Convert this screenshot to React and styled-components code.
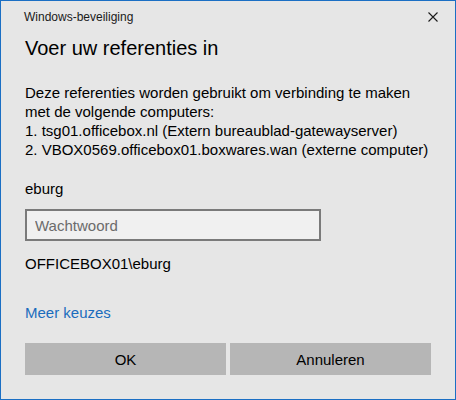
import React, { useState } from 'react'
import styled, { createGlobalStyle } from 'styled-components'

const GlobalStyle = createGlobalStyle`
  html, body {
    margin: 0;
    padding: 0;
    background: #e6e6e6;
  }
  * {
    box-sizing: border-box;
  }
`

const App = () => {
  const [password, setPassword] = useState("")

  return (
    <>
      <GlobalStyle />
      <Window>
        <TitleBar>
          <WindowTitle>Windows-beveiliging</WindowTitle>
          <CloseButton aria-label="Sluiten">
            <svg width="10" height="10" viewBox="0 0 10 10">
              <path d="M0.5 0.5 L9.5 9.5 M9.5 0.5 L0.5 9.5" stroke="#1a1a1a" strokeWidth="1.1" fill="none" />
            </svg>
          </CloseButton>
        </TitleBar>

        <Content>
          <Heading>Voer uw referenties in</Heading>

          <Description>
            Deze referenties worden gebruikt om verbinding te maken<br />
            met de volgende computers:<br />
            1. tsg01.officebox.nl (Extern bureaublad-gatewayserver)<br />
            2. VBOX0569.officebox01.boxwares.wan (externe computer)
          </Description>

          <UserName>eburg</UserName>

          <PasswordField
            type="password"
            placeholder="Wachtwoord"
            value={password}
            onChange={(e) => setPassword(e.target.value)}
          />

          <Domain>OFFICEBOX01\eburg</Domain>

          <MoreLink href="#">Meer keuzes</MoreLink>

          <ButtonRow>
            <DialogButton>OK</DialogButton>
            <DialogButton>Annuleren</DialogButton>
          </ButtonRow>
        </Content>
      </Window>
    </>
  )
}

export default App

const Window = styled.div`
  width: 456px;
  height: 400px;
  background-color: #e6e6e6;
  border: 1px solid #1b6fc4;
  display: flex;
  flex-direction: column;
  font-family: "Liberation Sans", Arial, sans-serif;
  color: #000;
`

const TitleBar = styled.div`
  height: 32px;
  display: flex;
  align-items: center;
  justify-content: space-between;
  padding: 0 17px 0 23px;
`

const WindowTitle = styled.span`
  font-size: 12px;
  line-height: 16px;
  color: #1a1a1a;
`

const CloseButton = styled.button`
  all: unset;
  width: 10px;
  height: 10px;
  display: flex;
  cursor: pointer;
`

const Content = styled.div`
  display: flex;
  flex-direction: column;
  align-items: flex-start;
  padding: 0 24px;
`

const Heading = styled.h1`
  margin: 1px 0 0;
  font-size: 20px;
  line-height: 28px;
  font-weight: normal;
`

const Description = styled.p`
  margin: 21px 0 0;
  font-size: 15px;
  line-height: 19px;
`

const UserName = styled.div`
  margin-top: 20px;
  font-size: 15px;
  line-height: 19px;
`

const PasswordField = styled.input`
  all: unset;
  box-sizing: border-box;
  margin-top: 11px;
  width: 296px;
  height: 32px;
  padding: 0 8px;
  border: 2px solid #7a7a7a;
  background-color: #f0f0f0;
  font-family: "Liberation Sans", Arial, sans-serif;
  font-size: 15px;
  color: #000;

  &::placeholder {
    color: #6b6b6b;
  }
`

const Domain = styled.div`
  margin-top: 13px;
  font-size: 15px;
  line-height: 19px;
`

const MoreLink = styled.a`
  margin-top: 30px;
  font-size: 15px;
  line-height: 19px;
  color: #1a6cbd;
  text-decoration: none;
`

const ButtonRow = styled.div`
  margin-top: 21px;
  width: 100%;
  display: grid;
  grid-template-columns: 1fr 1fr;
  gap: 4px;
`

const DialogButton = styled.button`
  all: unset;
  height: 32px;
  background-color: #b6b6b6;
  text-align: center;
  font-family: "Liberation Sans", Arial, sans-serif;
  font-size: 15px;
  color: #000;
  cursor: pointer;

  &:hover {
    background-color: #a8a8a8;
  }
`
